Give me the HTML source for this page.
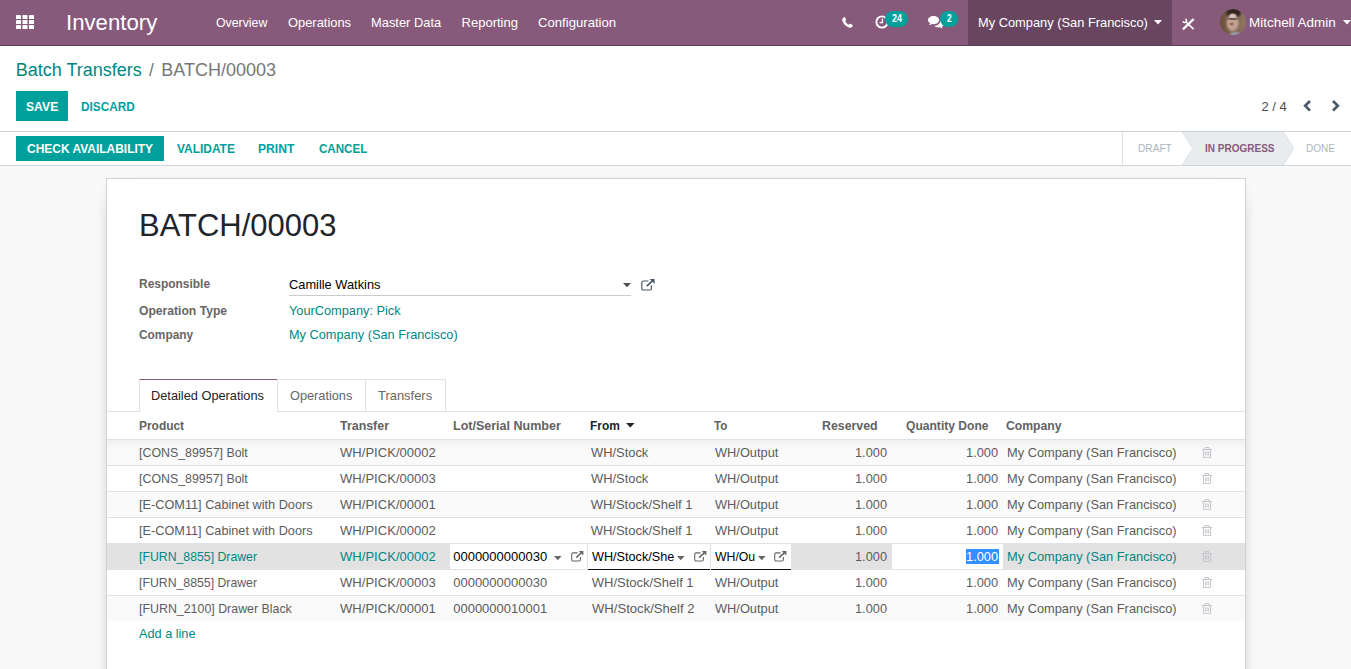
<!DOCTYPE html>
<html lang="en">
<head>
<meta charset="utf-8">
<title>Odoo - BATCH/00003</title>
<style>
*{box-sizing:border-box;}
html,body{margin:0;padding:0;}
body{width:1351px;height:669px;overflow:hidden;background:#f9f9f9;font-family:"Liberation Sans",sans-serif;font-size:13px;color:#4c4c4c;position:relative;}
.b{position:absolute;}
.x{position:absolute;white-space:pre;line-height:1;transform-origin:0 0;display:block;}
svg{position:absolute;display:block;overflow:visible;}
a{text-decoration:none;}
h1{margin:0;font-weight:normal;}
nav,header,main,section{display:block;}
.hl{position:absolute;left:107px;width:1138px;height:1px;background:#dee2e6;}
.odd{position:absolute;left:107px;width:1138px;height:25px;background:#fafafa;}
</style>
</head>
<body>
<nav>
<!-- navbar -->
<div class="b" id="nav" style="left:0;top:0;width:1351px;height:46px;background:#875a7b;border-bottom:1px solid #5f3f56;"></div>
<div class="b" style="left:968px;top:0;width:204px;height:45px;background:#68465f;"></div>
<!-- apps icon -->
<svg style="left:16px;top:15px" width="18" height="14" viewBox="0 0 18 14"><g fill="#fff"><rect x="0" y="0" width="5" height="4" rx=".6"/><rect x="6.5" y="0" width="5" height="4" rx=".6"/><rect x="13" y="0" width="5" height="4" rx=".6"/><rect x="0" y="5" width="5" height="4" rx=".6"/><rect x="6.5" y="5" width="5" height="4" rx=".6"/><rect x="13" y="5" width="5" height="4" rx=".6"/><rect x="0" y="10" width="5" height="4" rx=".6"/><rect x="6.5" y="10" width="5" height="4" rx=".6"/><rect x="13" y="10" width="5" height="4" rx=".6"/></g></svg>
<!-- phone -->
<svg style="left:842px;top:17px" width="11" height="11" viewBox="0 0 11 11"><path fill="#fff" d="M2.1 0.2 C2.5 0 2.9 0.1 3.1 0.5 L4.1 2.4 C4.3 2.8 4.2 3.1 3.9 3.4 L3.2 4 C3.7 5.4 5.3 7.1 6.8 7.7 L7.5 7 C7.8 6.7 8.2 6.6 8.5 6.8 L10.4 7.9 C10.8 8.1 10.9 8.5 10.7 8.9 C10.2 9.9 9.2 10.7 8.2 10.7 C4.6 10.4 0.4 6 0.2 2.7 C0.2 1.7 1 0.7 2.1 0.2 Z"/></svg>
<!-- clock -->
<svg style="left:874.9px;top:14.5px" width="14" height="14" viewBox="0 0 14 14"><circle cx="7" cy="7" r="5.6" fill="none" stroke="#fff" stroke-width="1.9"/><path d="M7.4 3.6 V7.6 H4.6" fill="none" stroke="#fff" stroke-width="1.3"/></svg>
<div class="b" style="left:885.2px;top:11px;width:22.9px;height:16px;border-radius:8px;background:#00a09d;"></div>
<!-- comments -->
<svg style="left:928px;top:16px" width="16" height="12" viewBox="0 0 16 12"><path fill="#fff" d="M5.6 0 C8.7 0 11.2 1.8 11.2 4.1 C11.2 6.4 8.7 8.2 5.6 8.2 C5.1 8.2 4.6 8.15 4.1 8.05 C3.2 8.7 2.1 9.1 1 9.2 C1.5 8.7 1.9 8 2.05 7.2 C0.8 6.45 0 5.35 0 4.1 C0 1.8 2.5 0 5.6 0 Z"/><path fill="#fff" d="M12.3 4.6 C14.3 5.2 15.8 6.4 15.8 7.9 C15.8 9 15 10 13.8 10.6 C13.95 11.3 14.3 11.8 14.8 12.3 C13.7 12.2 12.7 11.8 11.9 11.3 C11.4 11.4 10.9 11.45 10.4 11.45 C8.7 11.45 7.2 10.9 6.2 10.05 C9.6 9.9 12.4 7.7 12.3 4.6 Z"/></svg>
<div class="b" style="left:940px;top:11px;width:18px;height:16px;border-radius:8px;background:#00a09d;"></div>
<!-- company caret -->
<svg style="left:1154px;top:20px" width="8" height="5" viewBox="0 0 8 5"><path fill="#fff" d="M0 0H8L4 4.5Z"/></svg>
<!-- tools icon -->
<svg style="left:1181.6px;top:17.8px" width="13" height="12" viewBox="0 0 13 12"><g stroke="#fff" fill="none"><path d="M0.9 11.3 L11.7 1" stroke-width="2.3"/><path d="M4 4 L11.6 11.2" stroke-width="1.7"/><path d="M3.4 0.9 A1.9 1.9 0 1 1 0.9 3.4" stroke-width="1.5"/></g></svg>
<!-- avatar -->
<div class="b" style="left:1220px;top:9px;width:26px;height:26px;border-radius:50%;background:radial-gradient(ellipse 7px 1.5px at 12.6px 10px,rgba(70,52,48,.7) 40%,rgba(70,52,48,0) 100%),radial-gradient(ellipse 5px 3.2px at 12.8px 7px,#d8c5bc 40%,rgba(216,197,188,0) 100%),radial-gradient(ellipse 3px 2.2px at 11.6px 15px,rgba(160,84,62,.8) 30%,rgba(160,84,62,0) 100%),radial-gradient(ellipse 7.4px 10px at 12.6px 14px,#c0a294 60%,rgba(192,162,148,0) 100%),radial-gradient(ellipse 9px 5.5px at 13.6px 4px,#33261f 60%,rgba(51,38,31,0) 100%),radial-gradient(ellipse 7.5px 3.4px at 15.5px 25.6px,#939ca8 50%,rgba(147,156,168,0) 100%),linear-gradient(90deg,#6c503d,#7d6350 45%,#8f7660);"></div>
<!-- user caret -->
<svg style="left:1342.5px;top:20px" width="8" height="5" viewBox="0 0 8 5"><path fill="#fff" d="M0 0H8L4 4.5Z"/></svg>
<a class="x" style="left:66.48px;top:12px;font-size:22px;color:#fff;transform:scaleX(1.0080);">Inventory</a>
<a class="x" style="left:215.76px;top:16px;font-size:13px;color:#fff;transform:scaleX(0.9481);">Overview</a>
<a class="x" style="left:288.13px;top:16px;font-size:13px;color:#fff;transform:scaleX(0.9911);">Operations</a>
<a class="x" style="left:370.97px;top:16px;font-size:13px;color:#fff;transform:scaleX(0.9912);">Master Data</a>
<a class="x" style="left:461.60px;top:16px;font-size:13px;color:#fff;">Reporting</a>
<a class="x" style="left:537.59px;top:16px;font-size:13px;color:#fff;transform:scaleX(1.0105);">Configuration</a>
<a class="x" style="left:977.77px;top:16px;font-size:13px;color:#fff;transform:scaleX(0.9880);">My Company (San Francisco)</a>
<a class="x" style="left:1248.87px;top:16px;font-size:13px;color:#fff;transform:scaleX(1.0345);">Mitchell Admin</a>
<span class="x" style="left:891.85px;top:14px;font-size:10px;color:#fff;font-weight:bold;transform:scaleX(0.9015);">24</span>
<span class="x" style="left:947.30px;top:14px;font-size:10px;color:#fff;font-weight:bold;transform:scaleX(0.8430);">2</span>
</nav>
<header>
<!-- control panel -->
<div class="b" style="left:0;top:46px;width:1351px;height:86px;background:#fff;border-bottom:1px solid #cfd1d4;"></div>
<div class="b" style="left:16px;top:91px;width:52px;height:30px;background:#00a09d;"></div>
<!-- pager chevrons -->
<svg style="left:1303px;top:100px" width="9" height="12" viewBox="0 0 9 12"><path d="M7 1 L2.2 5.8 L7 10.6" fill="none" stroke="#4c5867" stroke-width="2.7"/></svg>
<svg style="left:1331px;top:100px" width="9" height="12" viewBox="0 0 9 12"><path d="M2 1 L6.8 5.8 L2 10.6" fill="none" stroke="#4c5867" stroke-width="2.7"/></svg>
<a class="x" style="left:15.72px;top:61px;font-size:18px;color:#008784;">Batch Transfers</a>
<span class="x" style="left:149.10px;top:61px;font-size:18px;color:#777;transform:scaleX(0.9800);">/</span>
<span class="x" style="left:161.30px;top:61px;font-size:18px;color:#777;">BATCH/00003</span>
<a class="x" style="left:25.86px;top:100px;font-size:13px;color:#fff;font-weight:bold;transform:scaleX(0.9364);">SAVE</a>
<a class="x" style="left:80.79px;top:100px;font-size:13px;color:#00a09d;font-weight:bold;transform:scaleX(0.9086);">DISCARD</a>
<span class="x" style="left:1261.38px;top:100px;font-size:13px;color:#4c4c4c;">2 / 4</span>
</header>
<div id="statusbar">
<!-- status bar -->
<div class="b" style="left:0;top:132px;width:1351px;height:34px;background:#fff;border-bottom:1px solid #ced4da;"></div>
<div class="b" style="left:16px;top:136px;width:148px;height:25px;background:#00a09d;"></div>
<div class="b" style="left:1122px;top:132px;width:1px;height:33px;background:#dee2e6;"></div>
<svg style="left:1180px;top:132px" width="116" height="33" viewBox="0 0 116 33"><path d="M2.3 0 H103.4 L113.8 16.5 L103.4 33 H2.3 L12.6 16.5 Z" fill="#e9ecef"/><path d="M2.3 0 L12.6 16.5 L2.3 33 M103.4 0 L113.8 16.5 L103.4 33" fill="none" stroke="#dee2e6" stroke-width="1"/></svg>
<a class="x" style="left:26.80px;top:142px;font-size:13px;color:#fff;font-weight:bold;transform:scaleX(0.9204);">CHECK AVAILABILITY</a>
<a class="x" style="left:177.39px;top:142px;font-size:13px;color:#00a09d;font-weight:bold;transform:scaleX(0.9174);">VALIDATE</a>
<a class="x" style="left:258.17px;top:142px;font-size:13px;color:#00a09d;font-weight:bold;transform:scaleX(0.9316);">PRINT</a>
<a class="x" style="left:318.80px;top:142px;font-size:13px;color:#00a09d;font-weight:bold;transform:scaleX(0.8907);">CANCEL</a>
<span class="x" style="left:1137.72px;top:143px;font-size:11.5px;color:#adb5bd;transform:scaleX(0.8824);">DRAFT</span>
<span class="x" style="left:1204.74px;top:143px;font-size:11.5px;color:#875a7b;font-weight:bold;transform:scaleX(0.8699);">IN PROGRESS</span>
<span class="x" style="left:1306.13px;top:143px;font-size:11.5px;color:#adb5bd;transform:scaleX(0.8687);">DONE</span>
</div>
<main>
<!-- sheet -->
<div class="b" style="left:106px;top:178px;width:1140px;height:520px;background:#fff;border:1px solid #cdd2d9;box-shadow:0 5px 20px -15px #000;"></div>
<!-- responsible field -->
<div class="b" style="left:289px;top:295px;width:342px;height:1px;background:#ccc;"></div>
<svg style="left:623px;top:283px" width="8" height="5" viewBox="0 0 8 5"><path fill="#4c4c4c" d="M0 0H8L4 4.2Z"/></svg>
<svg style="left:640.5px;top:279px" width="14" height="12" viewBox="0 0 14 12"><g fill="none" stroke="#4c5b6a"><path d="M10.4 6.6 V9.4 C10.4 10.4 9.8 11 8.8 11 H2.4 C1.4 11 0.8 10.4 0.8 9.4 V3.6 C0.8 2.6 1.4 2 2.4 2 H7.4" stroke-width="1.2"/><path d="M5.8 7.2 L12.4 0.9" stroke-width="1.7"/></g><path fill="#4c5b6a" d="M8.6 0 H13.6 V5 Z"/></svg>
<h1 class="x" style="left:139.25px;top:210px;font-size:31.5px;color:#212529;transform:scaleX(0.9833);">BATCH/00003</h1>
<label class="x" style="left:138.88px;top:277px;font-size:13px;color:#666;font-weight:bold;transform:scaleX(0.9197);">Responsible</label>
<label class="x" style="left:139.00px;top:304px;font-size:13px;color:#666;font-weight:bold;transform:scaleX(0.9330);">Operation Type</label>
<label class="x" style="left:138.87px;top:328px;font-size:13px;color:#666;font-weight:bold;transform:scaleX(0.9134);">Company</label>
<span class="x" style="left:288.80px;top:278px;font-size:13px;color:#000;transform:scaleX(0.9863);">Camille Watkins</span>
<a class="x" style="left:289.16px;top:304px;font-size:13px;color:#008784;transform:scaleX(0.9819);">YourCompany: Pick</a>
<a class="x" style="left:289.02px;top:328px;font-size:13px;color:#008784;transform:scaleX(0.9809);">My Company (San Francisco)</a>
<section id="notebook">
<!-- tabs -->
<div class="hl" style="top:411px;"></div>
<div class="b" style="left:139px;top:379px;width:139px;height:33px;background:#fff;border:1px solid #dee2e6;border-top-color:#875a7b;border-bottom:none;"></div>
<div class="b" style="left:277px;top:379px;width:89px;height:32px;border:1px solid #dee2e6;border-bottom:none;"></div>
<div class="b" style="left:365px;top:379px;width:81px;height:32px;border:1px solid #dee2e6;border-bottom:none;"></div>
<a class="x" style="left:151.30px;top:389px;font-size:13px;color:#212529;transform:scaleX(0.9832);">Detailed Operations</a>
<a class="x" style="left:290.15px;top:389px;font-size:13px;color:#666;transform:scaleX(0.9800);">Operations</a>
<a class="x" style="left:378.34px;top:389px;font-size:13px;color:#666;transform:scaleX(0.9947);">Transfers</a>
<!-- table -->
<svg style="left:626.2px;top:423.2px" width="8.6" height="5" viewBox="0 0 8 5" preserveAspectRatio="none"><path fill="#212529" d="M0 0H8L4 4.5Z"/></svg>
<div class="hl" style="top:439px;background:#dee2e6;"></div>
<div class="odd" style="top:440px;background:linear-gradient(#f0f0f0,#f5f5f5 4px,#fafafa 10px);"></div>
<div class="hl" style="top:465px;"></div>
<div class="hl" style="top:491px;"></div>
<div class="odd" style="top:492px;"></div>
<div class="hl" style="top:517px;"></div>
<div class="hl" style="top:543px;"></div>
<div class="b" style="left:107px;top:544px;width:1138px;height:26px;background:#e2e2e2;"></div>
<div class="hl" style="top:595px;"></div>
<div class="odd" style="top:596px;"></div>
<!-- editing cells -->
<div class="b" style="left:450px;top:544px;width:137px;height:26px;background:#fff;border-bottom:1px solid #dee2e6;"></div>
<div class="b" style="left:588px;top:544px;width:122px;height:26px;background:#fff;border-bottom:1px solid #111;"></div>
<div class="b" style="left:711px;top:544px;width:80px;height:26px;background:#fff;border-bottom:1px solid #111;"></div>
<div class="b" style="left:892px;top:544px;width:111px;height:26px;background:#fff;border-bottom:1px solid #dee2e6;"></div>
<div class="b" style="left:966px;top:549px;width:33px;height:15px;background:#3390ff;"></div>
<svg style="left:1202px;top:447px" width="10" height="11" viewBox="0 0 10 11"><g fill="none" stroke="#c3c4cc" stroke-width="1"><path d="M0 2.5 H10"/><path d="M3 2.5 V0.6 H7 V2.5"/><path d="M1.4 2.5 V10.4 H8.6 V2.5"/><path d="M3.4 4.4 V8.6 M5 4.4 V8.6 M6.6 4.4 V8.6" stroke-width="0.9"/></g></svg>
<svg style="left:1202px;top:473px" width="10" height="11" viewBox="0 0 10 11"><g fill="none" stroke="#c3c4cc" stroke-width="1"><path d="M0 2.5 H10"/><path d="M3 2.5 V0.6 H7 V2.5"/><path d="M1.4 2.5 V10.4 H8.6 V2.5"/><path d="M3.4 4.4 V8.6 M5 4.4 V8.6 M6.6 4.4 V8.6" stroke-width="0.9"/></g></svg>
<svg style="left:1202px;top:499px" width="10" height="11" viewBox="0 0 10 11"><g fill="none" stroke="#c3c4cc" stroke-width="1"><path d="M0 2.5 H10"/><path d="M3 2.5 V0.6 H7 V2.5"/><path d="M1.4 2.5 V10.4 H8.6 V2.5"/><path d="M3.4 4.4 V8.6 M5 4.4 V8.6 M6.6 4.4 V8.6" stroke-width="0.9"/></g></svg>
<svg style="left:1202px;top:525px" width="10" height="11" viewBox="0 0 10 11"><g fill="none" stroke="#c3c4cc" stroke-width="1"><path d="M0 2.5 H10"/><path d="M3 2.5 V0.6 H7 V2.5"/><path d="M1.4 2.5 V10.4 H8.6 V2.5"/><path d="M3.4 4.4 V8.6 M5 4.4 V8.6 M6.6 4.4 V8.6" stroke-width="0.9"/></g></svg>
<svg style="left:1202px;top:551px" width="10" height="11" viewBox="0 0 10 11"><g fill="none" stroke="#c3c4cc" stroke-width="1"><path d="M0 2.5 H10"/><path d="M3 2.5 V0.6 H7 V2.5"/><path d="M1.4 2.5 V10.4 H8.6 V2.5"/><path d="M3.4 4.4 V8.6 M5 4.4 V8.6 M6.6 4.4 V8.6" stroke-width="0.9"/></g></svg>
<svg style="left:1202px;top:577px" width="10" height="11" viewBox="0 0 10 11"><g fill="none" stroke="#c3c4cc" stroke-width="1"><path d="M0 2.5 H10"/><path d="M3 2.5 V0.6 H7 V2.5"/><path d="M1.4 2.5 V10.4 H8.6 V2.5"/><path d="M3.4 4.4 V8.6 M5 4.4 V8.6 M6.6 4.4 V8.6" stroke-width="0.9"/></g></svg>
<svg style="left:1202px;top:603px" width="10" height="11" viewBox="0 0 10 11"><g fill="none" stroke="#c3c4cc" stroke-width="1"><path d="M0 2.5 H10"/><path d="M3 2.5 V0.6 H7 V2.5"/><path d="M1.4 2.5 V10.4 H8.6 V2.5"/><path d="M3.4 4.4 V8.6 M5 4.4 V8.6 M6.6 4.4 V8.6" stroke-width="0.9"/></g></svg>
<svg style="left:553.5px;top:555.7px" width="7.6" height="4.2" viewBox="0 0 8 5" preserveAspectRatio="none"><path fill="#666" d="M0 0H8L4 5Z"/></svg>
<svg style="left:571px;top:550.6px" width="13" height="11" viewBox="0 0 13 11"><g fill="none" stroke="#666"><path d="M9.4 6 V8.6 C9.4 9.5 8.9 10 8 10 H2.1 C1.2 10 0.7 9.5 0.7 8.6 V3.3 C0.7 2.4 1.2 1.9 2.1 1.9 H6.6" stroke-width="1.1"/><path d="M5.2 6.6 L11.2 0.9" stroke-width="1.5"/></g><path fill="#666" d="M7.8 0 H12.4 V4.6 Z"/></svg>
<svg style="left:677px;top:555.7px" width="7.6" height="4.2" viewBox="0 0 8 5" preserveAspectRatio="none"><path fill="#666" d="M0 0H8L4 5Z"/></svg>
<svg style="left:693.6px;top:550.6px" width="13" height="11" viewBox="0 0 13 11"><g fill="none" stroke="#666"><path d="M9.4 6 V8.6 C9.4 9.5 8.9 10 8 10 H2.1 C1.2 10 0.7 9.5 0.7 8.6 V3.3 C0.7 2.4 1.2 1.9 2.1 1.9 H6.6" stroke-width="1.1"/><path d="M5.2 6.6 L11.2 0.9" stroke-width="1.5"/></g><path fill="#666" d="M7.8 0 H12.4 V4.6 Z"/></svg>
<svg style="left:757.6px;top:555.7px" width="7.6" height="4.2" viewBox="0 0 8 5" preserveAspectRatio="none"><path fill="#666" d="M0 0H8L4 5Z"/></svg>
<svg style="left:774.4px;top:550.6px" width="13" height="11" viewBox="0 0 13 11"><g fill="none" stroke="#666"><path d="M9.4 6 V8.6 C9.4 9.5 8.9 10 8 10 H2.1 C1.2 10 0.7 9.5 0.7 8.6 V3.3 C0.7 2.4 1.2 1.9 2.1 1.9 H6.6" stroke-width="1.1"/><path d="M5.2 6.6 L11.2 0.9" stroke-width="1.5"/></g><path fill="#666" d="M7.8 0 H12.4 V4.6 Z"/></svg>
<b class="x" style="left:139.19px;top:419px;font-size:13px;color:#626262;transform:scaleX(0.9176);">Product</b>
<b class="x" style="left:340.30px;top:419px;font-size:13px;color:#626262;transform:scaleX(0.9549);">Transfer</b>
<b class="x" style="left:453.04px;top:419px;font-size:13px;color:#626262;transform:scaleX(0.9624);">Lot/Serial Number</b>
<b class="x" style="left:589.88px;top:419px;font-size:13px;color:#212529;transform:scaleX(0.9194);">From</b>
<b class="x" style="left:713.70px;top:419px;font-size:13px;color:#626262;transform:scaleX(0.8933);">To</b>
<b class="x" style="left:821.85px;top:419px;font-size:13px;color:#626262;transform:scaleX(0.9491);">Reserved</b>
<b class="x" style="left:905.74px;top:419px;font-size:13px;color:#626262;transform:scaleX(0.9291);">Quantity Done</b>
<b class="x" style="left:1006.35px;top:419px;font-size:13px;color:#626262;transform:scaleX(0.9371);">Company</b>
<span class="x" style="left:138.83px;top:446px;font-size:13px;color:#5c5c5c;transform:scaleX(0.9524);">[CONS_89957] Bolt</span>
<span class="x" style="left:340.13px;top:446px;font-size:13px;color:#5c5c5c;transform:scaleX(1.0051);">WH/PICK/00002</span>
<span class="x" style="left:590.90px;top:446px;font-size:13px;color:#5c5c5c;transform:scaleX(0.9918);">WH/Stock</span>
<span class="x" style="left:714.86px;top:446px;font-size:13px;color:#5c5c5c;transform:scaleX(0.9855);">WH/Output</span>
<span class="x" style="left:855.42px;top:446px;font-size:13px;color:#5c5c5c;transform:scaleX(0.9839);">1.000</span>
<span class="x" style="left:966.41px;top:446px;font-size:13px;color:#5c5c5c;transform:scaleX(0.9871);">1.000</span>
<span class="x" style="left:1006.93px;top:446px;font-size:13px;color:#5c5c5c;transform:scaleX(0.9866);">My Company (San Francisco)</span>
<span class="x" style="left:138.83px;top:472px;font-size:13px;color:#5c5c5c;transform:scaleX(0.9524);">[CONS_89957] Bolt</span>
<span class="x" style="left:340.17px;top:472px;font-size:13px;color:#5c5c5c;transform:scaleX(1.0054);">WH/PICK/00003</span>
<span class="x" style="left:590.90px;top:472px;font-size:13px;color:#5c5c5c;transform:scaleX(0.9918);">WH/Stock</span>
<span class="x" style="left:714.86px;top:472px;font-size:13px;color:#5c5c5c;transform:scaleX(0.9855);">WH/Output</span>
<span class="x" style="left:855.42px;top:472px;font-size:13px;color:#5c5c5c;transform:scaleX(0.9839);">1.000</span>
<span class="x" style="left:966.41px;top:472px;font-size:13px;color:#5c5c5c;transform:scaleX(0.9871);">1.000</span>
<span class="x" style="left:1006.93px;top:472px;font-size:13px;color:#5c5c5c;transform:scaleX(0.9866);">My Company (San Francisco)</span>
<span class="x" style="left:138.92px;top:498px;font-size:13px;color:#5c5c5c;transform:scaleX(0.9778);">[E-COM11] Cabinet with Doors</span>
<span class="x" style="left:340.13px;top:498px;font-size:13px;color:#5c5c5c;transform:scaleX(1.0050);">WH/PICK/00001</span>
<span class="x" style="left:590.63px;top:498px;font-size:13px;color:#5c5c5c;">WH/Stock/Shelf 1</span>
<span class="x" style="left:714.86px;top:498px;font-size:13px;color:#5c5c5c;transform:scaleX(0.9855);">WH/Output</span>
<span class="x" style="left:855.42px;top:498px;font-size:13px;color:#5c5c5c;transform:scaleX(0.9839);">1.000</span>
<span class="x" style="left:966.41px;top:498px;font-size:13px;color:#5c5c5c;transform:scaleX(0.9871);">1.000</span>
<span class="x" style="left:1006.93px;top:498px;font-size:13px;color:#5c5c5c;transform:scaleX(0.9866);">My Company (San Francisco)</span>
<span class="x" style="left:138.92px;top:524px;font-size:13px;color:#5c5c5c;transform:scaleX(0.9778);">[E-COM11] Cabinet with Doors</span>
<span class="x" style="left:340.13px;top:524px;font-size:13px;color:#5c5c5c;transform:scaleX(1.0051);">WH/PICK/00002</span>
<span class="x" style="left:590.63px;top:524px;font-size:13px;color:#5c5c5c;">WH/Stock/Shelf 1</span>
<span class="x" style="left:714.86px;top:524px;font-size:13px;color:#5c5c5c;transform:scaleX(0.9855);">WH/Output</span>
<span class="x" style="left:855.42px;top:524px;font-size:13px;color:#5c5c5c;transform:scaleX(0.9839);">1.000</span>
<span class="x" style="left:966.41px;top:524px;font-size:13px;color:#5c5c5c;transform:scaleX(0.9871);">1.000</span>
<span class="x" style="left:1006.93px;top:524px;font-size:13px;color:#5c5c5c;transform:scaleX(0.9866);">My Company (San Francisco)</span>
<span class="x" style="left:138.96px;top:550px;font-size:13px;color:#008784;transform:scaleX(0.9444);">[FURN_8855] Drawer</span>
<span class="x" style="left:340.13px;top:550px;font-size:13px;color:#008784;transform:scaleX(1.0051);">WH/PICK/00002</span>
<span class="x" style="left:453.21px;top:550px;font-size:13px;color:#000;">0000000000030</span>
<div class="b" style="left:588px;top:550px;width:86.3px;height:17px;overflow:hidden"><span class="x" style="left:3.90px;top:0px;font-size:13px;color:#000;transform:scaleX(0.9740);">WH/Stock/Shelf 1</span></div>
<div class="b" style="left:711px;top:550px;width:44.4px;height:17px;overflow:hidden"><span class="x" style="left:4.20px;top:0px;font-size:13px;color:#000;transform:scaleX(0.9429);">WH/Output</span></div>
<span class="x" style="left:855.42px;top:550px;font-size:13px;color:#5c5c5c;transform:scaleX(0.9839);">1.000</span>
<span class="x" style="left:966.41px;top:550px;font-size:13px;color:#fff;transform:scaleX(0.9871);">1.000</span>
<span class="x" style="left:1006.93px;top:550px;font-size:13px;color:#008784;transform:scaleX(0.9866);">My Company (San Francisco)</span>
<span class="x" style="left:138.96px;top:576px;font-size:13px;color:#5c5c5c;transform:scaleX(0.9444);">[FURN_8855] Drawer</span>
<span class="x" style="left:340.17px;top:576px;font-size:13px;color:#5c5c5c;transform:scaleX(1.0054);">WH/PICK/00003</span>
<span class="x" style="left:453.21px;top:576px;font-size:13px;color:#5c5c5c;">0000000000030</span>
<span class="x" style="left:591.73px;top:576px;font-size:13px;color:#5c5c5c;">WH/Stock/Shelf 1</span>
<span class="x" style="left:714.86px;top:576px;font-size:13px;color:#5c5c5c;transform:scaleX(0.9855);">WH/Output</span>
<span class="x" style="left:855.42px;top:576px;font-size:13px;color:#5c5c5c;transform:scaleX(0.9839);">1.000</span>
<span class="x" style="left:966.41px;top:576px;font-size:13px;color:#5c5c5c;transform:scaleX(0.9871);">1.000</span>
<span class="x" style="left:1006.93px;top:576px;font-size:13px;color:#5c5c5c;transform:scaleX(0.9866);">My Company (San Francisco)</span>
<span class="x" style="left:138.65px;top:602px;font-size:13px;color:#5c5c5c;transform:scaleX(0.9528);">[FURN_2100] Drawer Black</span>
<span class="x" style="left:340.13px;top:602px;font-size:13px;color:#5c5c5c;transform:scaleX(1.0050);">WH/PICK/00001</span>
<span class="x" style="left:453.21px;top:602px;font-size:13px;color:#5c5c5c;">0000000010001</span>
<span class="x" style="left:591.97px;top:602px;font-size:13px;color:#5c5c5c;transform:scaleX(1.0070);">WH/Stock/Shelf 2</span>
<span class="x" style="left:714.86px;top:602px;font-size:13px;color:#5c5c5c;transform:scaleX(0.9855);">WH/Output</span>
<span class="x" style="left:855.42px;top:602px;font-size:13px;color:#5c5c5c;transform:scaleX(0.9839);">1.000</span>
<span class="x" style="left:966.41px;top:602px;font-size:13px;color:#5c5c5c;transform:scaleX(0.9871);">1.000</span>
<span class="x" style="left:1006.93px;top:602px;font-size:13px;color:#5c5c5c;transform:scaleX(0.9866);">My Company (San Francisco)</span>
<a class="x" style="left:139.40px;top:627px;font-size:13px;color:#008784;transform:scaleX(0.9772);">Add a line</a>
</section>
</main>
</body>
</html>
